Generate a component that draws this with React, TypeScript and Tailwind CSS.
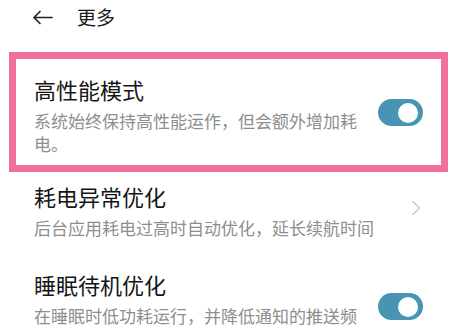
import React from "react";

const font = { fontFamily: '"Noto Sans CJK SC", "Noto Sans", sans-serif' };

function Toggle() {
  return (
    <div className="flex h-[27px] w-[45px] shrink-0 items-center justify-end rounded-full bg-[#4794b3] pr-[5px]">
      <div className="h-[20px] w-[20px] rounded-full bg-white" />
    </div>
  );
}

function Chevron() {
  return (
    <div className="flex h-[27px] w-[45px] shrink-0 items-center justify-end pr-[1px]">
      <svg width="11" height="16" viewBox="0 0 11 16" fill="none">
        <path d="M2 1.5 L8.5 8 L2 14.5" stroke="#c9c9c9" strokeWidth="1.5" strokeLinecap="round" strokeLinejoin="round" />
      </svg>
    </div>
  );
}

function ItemText({ title, desc }: { title: string; desc: string }) {
  return (
    <div className="min-w-0 flex-1">
      <div className="text-[22px] leading-[28px] text-[#151515]">{title}</div>
      <div className="mt-[6px] text-[17px] leading-[23px] text-[#8e8e8e]">{desc}</div>
    </div>
  );
}

export default function App() {
  return (
    <div className="h-[332px] w-[466px] overflow-hidden bg-white" style={font}>
      <div className="flex h-[34px] items-center pl-[32px]">
        <svg width="21" height="15" viewBox="0 0 21 15" fill="none">
          <path d="M20 7.5 H2 M8 1.5 L2 7.5 L8 13.5" stroke="#222" strokeWidth="1.7" strokeLinecap="round" strokeLinejoin="round" />
        </svg>
        <span className="ml-[24px] text-[19px] leading-[24px] text-[#1a1a1a]">更多</span>
      </div>

      <div className="ml-[9px] mr-[18px] mt-[18px] border-[7px] border-[#f0709a] pb-[10px] pl-[18px] pr-[18px] pt-[16px]">
        <div className="flex items-center">
          <ItemText title="高性能模式" desc="系统始终保持高性能运作，但会额外增加耗电。" />
          <div className="mb-[5px] ml-[8px]">
            <Toggle />
          </div>
        </div>
      </div>

      <div className="flex items-center pl-[34px] pr-[43px] pt-[10px]">
        <ItemText title="耗电异常优化" desc="后台应用耗电过高时自动优化，延长续航时间" />
        <div className="mb-[5px] ml-[4px]">
          <Chevron />
        </div>
      </div>

      <div className="flex items-end pl-[34px] pr-[43px] pt-[31px]">
        <ItemText title="睡眠待机优化" desc="在睡眠时低功耗运行，并降低通知的推送频" />
        <div className="mb-[7px] ml-[8px]">
          <Toggle />
        </div>
      </div>
    </div>
  );
}
